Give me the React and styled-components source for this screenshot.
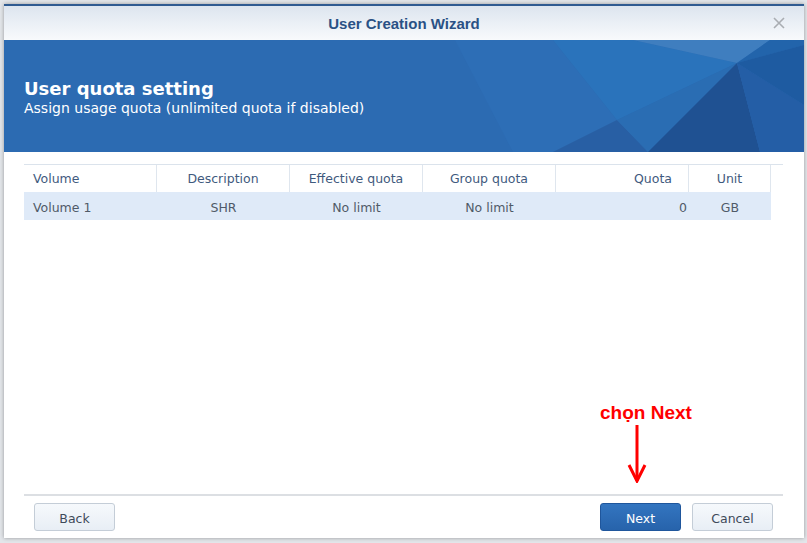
import styled, { createGlobalStyle } from "styled-components";

const GlobalStyle = createGlobalStyle`
  html, body {
    margin: 0;
    padding: 0;
    background: #e3e6ea;
  }
  body {
    font-family: "DejaVu Sans", Verdana, sans-serif;
  }
`;

const columns = [
  { key: "volume", label: "Volume", align: "left" },
  { key: "description", label: "Description", align: "center" },
  { key: "effective", label: "Effective quota", align: "center" },
  { key: "group", label: "Group quota", align: "center" },
  { key: "quota", label: "Quota", align: "right" },
  { key: "unit", label: "Unit", align: "center" },
];

const rows = [
  {
    volume: "Volume 1",
    description: "SHR",
    effective: "No limit",
    group: "No limit",
    quota: "0",
    unit: "GB",
  },
];

const App = () => {
  return (
    <Page>
      <GlobalStyle />
      <Dialog>
        <TitleBar>
          <Title>User Creation Wizard</Title>
          <CloseButton aria-label="close">
            <svg width="12" height="12" viewBox="0 0 12 12">
              <path
                d="M1 1 L11 11 M11 1 L1 11"
                stroke="#a9adb2"
                strokeWidth="1.6"
                fill="none"
              />
            </svg>
          </CloseButton>
        </TitleBar>

        <Banner>
          <Facets viewBox="0 0 800 112" preserveAspectRatio="none">
            <polygon points="451,0 549,0 613,80 549,112 509,112" fill="#2d6eb6" />
            <polygon points="549,0 629,0 733,23 613,80" fill="#2a73bb" />
            <polygon points="629,0 766,0 733,23" fill="#3f7ebf" />
            <polygon points="766,0 800,0 800,5 733,23" fill="#2264ab" />
            <polygon points="613,80 549,112 644,112" fill="#285fa4" />
            <polygon points="733,23 613,80 644,112" fill="#2a6db3" />
            <polygon points="733,23 644,112 756,112" fill="#1f5192" />
            <polygon points="733,23 756,112 800,112 800,65" fill="#245ea6" />
            <polygon points="733,23 800,5 800,65" fill="#1e5ba1" />
          </Facets>
          <BannerText>
            <BannerTitle>User quota setting</BannerTitle>
            <BannerSub>Assign usage quota (unlimited quota if disabled)</BannerSub>
          </BannerText>
        </Banner>

        <Content>
          <Grid>
            <HeadRow>
              {columns.map((col) => (
                <HeadCell key={col.key} $align={col.align} $key={col.key}>
                  {col.label}
                </HeadCell>
              ))}
              <HeadCell $align="left" />
            </HeadRow>
            {rows.map((row, index) => (
              <BodyRow key={index}>
                {columns.map((col) => (
                  <BodyCell key={col.key} $align={col.align} $key={col.key}>
                    {row[col.key]}
                  </BodyCell>
                ))}
              </BodyRow>
            ))}
          </Grid>
        </Content>

        <Footer>
          <Button>Back</Button>
          <FooterRight>
            <Button $primary>Next</Button>
            <Button>Cancel</Button>
          </FooterRight>
        </Footer>
      </Dialog>

      <Annotation>
        <AnnotationText>chọn Next</AnnotationText>
        <Arrow width="20" height="58" viewBox="0 0 20 58">
          <path d="M10 0 L10 56" stroke="#ff0000" strokeWidth="3" fill="none" />
          <path
            d="M2 40 L10 56 L18 40"
            stroke="#ff0000"
            strokeWidth="3"
            fill="none"
          />
        </Arrow>
      </Annotation>
    </Page>
  );
};

const Page = styled.div`
  position: relative;
  width: 807px;
  height: 543px;
  padding: 4px 3px 5px 4px;
  box-sizing: border-box;
  overflow: hidden;
`;

const Dialog = styled.div`
  width: 800px;
  height: 534px;
  display: flex;
  flex-direction: column;
  background: #ffffff;
  box-shadow: 0 0 4px rgba(0, 0, 0, 0.35);
`;

const TitleBar = styled.div`
  position: relative;
  height: 34px;
  border-top: 2px solid #2f5b91;
  background: linear-gradient(#dde5ef, #f8fafc);
  display: flex;
  align-items: center;
  justify-content: center;
  flex-shrink: 0;
`;

const Title = styled.div`
  font-family: "Liberation Sans", Arial, sans-serif;
  font-weight: 700;
  font-size: 15px;
  color: #2a5185;
  margin-top: 1px;
`;

const CloseButton = styled.div`
  position: absolute;
  right: 19px;
  top: 11px;
  width: 12px;
  height: 12px;
  display: flex;
`;

const Banner = styled.div`
  position: relative;
  height: 112px;
  background: #2c6bb2;
  flex-shrink: 0;
  overflow: hidden;
`;

const Facets = styled.svg`
  position: absolute;
  left: 0;
  top: 0;
  width: 800px;
  height: 112px;
`;

const BannerText = styled.div`
  position: relative;
  padding: 38px 0 0 20px;
  color: #ffffff;
`;

const BannerTitle = styled.div`
  font-weight: 700;
  font-size: 18px;
  line-height: 22px;
`;

const BannerSub = styled.div`
  font-size: 14px;
  line-height: 17px;
`;

const Content = styled.div`
  flex: 1;
  padding: 12px 21px 0 20px;
`;

const Grid = styled.div`
  display: flex;
  flex-direction: column;
  width: 759px;
`;

const HeadRow = styled.div`
  display: grid;
  grid-template-columns: 133px 133px 133px 133px 133px 82px 12px;
  height: 28px;
  border-top: 1px solid #dbe3ec;
  box-sizing: border-box;
`;

const padFor = (key, head) => {
  if (key === "volume") return "0 0 0 9px";
  if (key === "quota") return head ? "0 16px 0 0" : "0 2px 0 0";
  return "0";
};

const HeadCell = styled.div`
  display: flex;
  align-items: center;
  justify-content: ${(p) =>
    p.$align === "right" ? "flex-end" : p.$align === "center" ? "center" : "flex-start"};
  padding: ${(p) => padFor(p.$key, true)};
  font-size: 12.5px;
  color: #3f5a7e;
  border-right: 1px solid #dfe6ee;
  &:last-child {
    border-right: none;
  }
`;

const BodyRow = styled.div`
  display: grid;
  grid-template-columns: 133px 133px 133px 133px 133px 82px;
  width: 747px;
  height: 28px;
  background: #dfeaf8;
`;

const BodyCell = styled.div`
  display: flex;
  align-items: center;
  justify-content: ${(p) =>
    p.$align === "right" ? "flex-end" : p.$align === "center" ? "center" : "flex-start"};
  padding: ${(p) => padFor(p.$key, false)};
  padding-top: 2px;
  font-size: 12.5px;
  color: #505a68;
`;

const Footer = styled.div`
  margin: 0 21px 0 20px;
  border-top: 2px solid #dcdfe3;
  padding: 7px 10px 7px 10px;
  display: flex;
  justify-content: space-between;
  align-items: center;
`;

const FooterRight = styled.div`
  display: flex;
  gap: 11px;
`;

const Button = styled.button`
  width: 81px;
  height: 28px;
  border-radius: 3px;
  font-family: "DejaVu Sans", Verdana, sans-serif;
  font-size: 12.5px;
  padding: 2px 0 0;
  cursor: pointer;
  border: 1px solid ${(p) => (p.$primary ? "#1f569c" : "#c4cdd7")};
  background: ${(p) =>
    p.$primary
      ? "linear-gradient(#3375c0, #2763ab)"
      : "linear-gradient(#f6f9fc, #e8eef5)"};
  color: ${(p) => (p.$primary ? "#ffffff" : "#3e4a5a")};
`;

const Annotation = styled.div`
  position: absolute;
  left: 600px;
  top: 402px;
  display: flex;
  flex-direction: column;
  align-items: flex-start;
`;

const AnnotationText = styled.div`
  font-family: "Liberation Sans", Arial, sans-serif;
  font-weight: 700;
  font-size: 19px;
  line-height: 22px;
  color: #ff0000;
  white-space: nowrap;
`;

const Arrow = styled.svg`
  margin-left: 27px;
  margin-top: 1px;
`;

export default App;
